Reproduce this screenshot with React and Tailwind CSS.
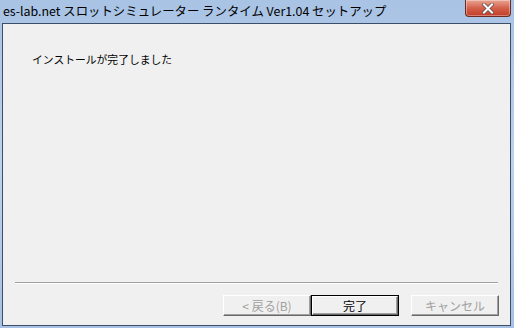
import React from "react";

const FONT = "font-['Noto_Sans_CJK_JP','Liberation_Sans',sans-serif]";

function WinButton({ label, disabled, isDefault }) {
  return (
    <div
      className={
        "flex h-[21px] w-[88px] items-center justify-center " +
        (isDefault ? "border border-black" : "")
      }
    >
      <div className="flex h-full w-full items-center justify-center border-t border-l border-b border-r border-t-white border-l-white border-b-[#696969] border-r-[#696969] bg-[#f0f0f0] shadow-[inset_-1px_-1px_0_#a0a0a0]">
        <span
          className={
            "text-[12px] leading-none " +
            (disabled ? "text-[#a0a0a0]" : "text-black")
          }
        >
          {label}
        </span>
      </div>
    </div>
  );
}

function CloseButton() {
  return (
    <div className="flex h-[17px] w-[46px] items-center justify-center rounded-b-[4px] border border-t-0 border-[#6b2a22] bg-gradient-to-b from-[#e8a493] via-[#d4614c] to-[#c23b24] shadow-[inset_0_0_0_1px_rgba(255,255,255,0.35)]">
      <svg width="12" height="11" viewBox="0 0 12 11">
        <path
          d="M2 1.5 L10 9.5 M10 1.5 L2 9.5"
          stroke="#5a4a48"
          strokeWidth="3.4"
          strokeLinecap="square"
        />
        <path
          d="M2 1.5 L10 9.5 M10 1.5 L2 9.5"
          stroke="#ffffff"
          strokeWidth="2"
          strokeLinecap="square"
        />
      </svg>
    </div>
  );
}

export default function App() {
  return (
    <div
      className={
        "flex h-[328px] w-[514px] flex-col bg-gradient-to-b from-[#a9c3e5] via-[#bcd2ec] to-[#a7c1e4] pl-[2px] pr-[3px] pb-[2px] " +
        FONT
      }
    >
      <div className="flex h-[23px] items-start justify-between">
        <div className="pl-[1px] pt-[3px] text-[12.4px] leading-[16px] text-black">
          es-lab.net スロットシミュレーター ランタイム Ver1.04 セットアップ
        </div>
        <CloseButton />
      </div>
      <div className="flex flex-1 flex-col border border-[#3d4f68] bg-[#f0f0f0]">
        <div className="pl-[29px] pt-[28px] text-[10.8px] leading-[14px] text-black">
          インストールが完了しました
        </div>
        <div className="flex-1" />
        <div className="ml-[12px] mr-[12px] border-t border-b border-t-[#a0a0a0] border-b-white" />
        <div className="flex justify-end pt-[11px] pb-[9px] pr-[11px]">
          <div className="flex">
            <WinButton label="< 戻る(B)" disabled />
            <WinButton label="完了" isDefault />
          </div>
          <div className="w-[12px]" />
          <WinButton label="キャンセル" disabled />
        </div>
      </div>
    </div>
  );
}
